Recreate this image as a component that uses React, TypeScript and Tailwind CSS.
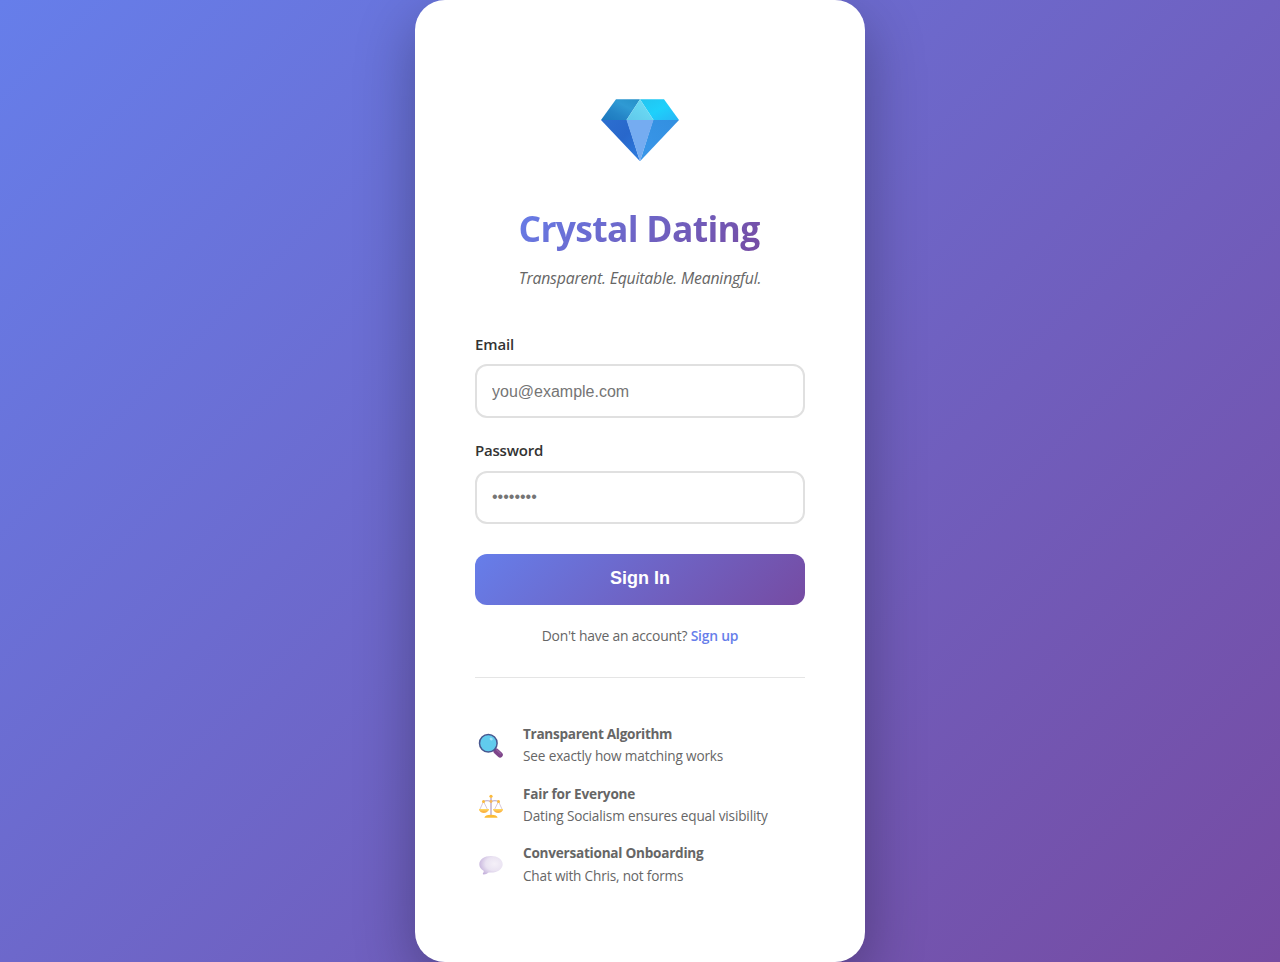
import React from "react";

function Diamond() {
  return (
    <svg width="80" height="64" viewBox="0 0 80 64" aria-hidden="true">
      <defs>
        <linearGradient id="d1" x1="0" y1="1" x2="1" y2="0">
          <stop offset="0" stopColor="#1b78bd" />
          <stop offset="0.35" stopColor="#2585c7" />
          <stop offset="0.65" stopColor="#2f9ad4" />
          <stop offset="1" stopColor="#2590c8" />
        </linearGradient>
        <linearGradient id="d2" x1="0" y1="0" x2="1" y2="1">
          <stop offset="0" stopColor="#22c4f0" />
          <stop offset="0.5" stopColor="#1ed0fb" />
          <stop offset="1" stopColor="#27b5f5" />
        </linearGradient>
        <linearGradient id="d3" x1="0" y1="1" x2="1" y2="0">
          <stop offset="0" stopColor="#60c8ea" />
          <stop offset="1" stopColor="#6ee0f7" />
        </linearGradient>
        <linearGradient id="d4" x1="0" y1="0" x2="1" y2="1">
          <stop offset="0" stopColor="#2c6fd0" />
          <stop offset="0.5" stopColor="#2867cb" />
          <stop offset="1" stopColor="#2c7de0" />
        </linearGradient>
        <linearGradient id="d5" x1="1" y1="0" x2="0" y2="1">
          <stop offset="0" stopColor="#328fe0" />
          <stop offset="1" stopColor="#3a97e9" />
        </linearGradient>
      </defs>
      <path d="M16 1.3H40L26.5 22H1Z" fill="url(#d1)" />
      <path d="M40 1.3H64L79 22H53.5Z" fill="url(#d2)" />
      <path d="M40 1.3L53.5 22H26.5Z" fill="url(#d3)" />
      <path d="M1 22H27L40 63.3Z" fill="url(#d4)" />
      <path d="M53 22H79L40 63.3Z" fill="url(#d5)" />
      <path d="M26.5 22H53.5L40 63.3Z" fill="#75acf1" />
    </svg>
  );
}

function Magnifier() {
  return (
    <svg width="26" height="26" viewBox="0 0 26 26" aria-hidden="true">
      <path d="M15.5 16L18 18.5" stroke="#62588e" strokeWidth="2" />
      <path d="M18.2 18.2L22 21.8" stroke="#7d4489" strokeWidth="5.6" strokeLinecap="round" />
      <path d="M18.8 17L22.8 20.8" stroke="#945f9f" strokeWidth="1.3" strokeLinecap="round" />
      <circle cx="10.3" cy="10.3" r="8.8" fill="#61cbed" stroke="#48578f" strokeWidth="1.5" />
      <ellipse cx="13.2" cy="6" rx="1.7" ry="1.3" transform="rotate(40 13.2 6)" fill="#a3e3f8" />
    </svg>
  );
}

function Scales() {
  return (
    <svg width="26" height="26" viewBox="0 -0.5 26 26" aria-hidden="true">
      <path d="M5.5 8L1.8 16M5.5 8L9.5 16M20.5 8L16.5 16M20.5 8L24.2 16" stroke="#d8c9d8" strokeWidth="1" />
      <path d="M5.5 8Q9 6.3 13 8Q17 6.3 20.5 8" fill="none" stroke="#c8b8cd" strokeWidth="1.4" />
      <path d="M13 4V22" stroke="#cdbdd0" strokeWidth="1.8" />
      <path d="M1 15.5H10.8C10.2 20.9 1.5 20.9 1 15.5ZM15.2 15.5H25C24.5 20.9 15.8 20.9 15.2 15.5Z" fill="#fbb545" />
      <path d="M1 15.5H10.8V16.9H1.3ZM15.2 15.5H25L24.7 16.9H15.5Z" fill="#ffd45c" />
      <path d="M6.4 24.2Q6.8 21.2 13 21.2Q19.2 21.2 19.6 24.2Z" fill="#fcbb35" />
      <circle cx="13" cy="2.8" r="1.6" fill="#fbbb3c" />
      <circle cx="5.5" cy="8" r="1.5" fill="#fbbb3c" />
      <circle cx="20.5" cy="8" r="1.5" fill="#fbbb3c" />
      <circle cx="13" cy="8" r="1.4" fill="#f6b653" />
    </svg>
  );
}

function Bubble() {
  return (
    <svg width="26" height="26" viewBox="0 0 26 26" aria-hidden="true">
      <defs>
        <radialGradient id="b1" cx="0.65" cy="0.42" r="0.75">
          <stop offset="0" stopColor="#f4f0f8" />
          <stop offset="0.5" stopColor="#eae3f2" />
          <stop offset="1" stopColor="#bfaad8" />
        </radialGradient>
      </defs>
      <path
        d="M13 4C19.5 4 24.7 7.4 24.7 12.2C24.7 17 19.5 20.6 13 20.6C12 20.6 11.4 20.6 10.6 20.5C9.2 21.6 7.6 22.5 5.6 22.5C4.8 22.5 4.6 21.8 5.1 21.1C5.6 20.4 5.9 19.5 5.6 18.7C2.9 17.3 1.3 15 1.3 12.2C1.3 7.4 6.5 4 13 4Z"
        fill="url(#b1)"
      />
    </svg>
  );
}

const features = [
  { icon: <Magnifier />, title: "Transparent Algorithm", text: "See exactly how matching works", titleClass: "tracking-[-0.3px]", textClass: "tracking-[-0.15px]" },
  { icon: <Scales />, title: "Fair for Everyone", text: "Dating Socialism ensures equal visibility", titleClass: "tracking-[-0.2px]", textClass: "tracking-[-0.15px]" },
  { icon: <Bubble />, title: "Conversational Onboarding", text: "Chat with Chris, not forms", titleClass: "tracking-[-0.25px]", textClass: "tracking-[-0.19px]" },
];

export default function App() {
  return (
    <div className="flex h-[962px] justify-center overflow-hidden bg-[linear-gradient(135deg,#667eea_0%,#764ba2_100%)] font-['Open_Sans','Noto_Sans',sans-serif] text-[#666]">
      <main className="flex h-full w-[450px] flex-col rounded-[30px] bg-white px-[60px] pt-[98px] shadow-[0_20px_60px_rgba(0,0,0,0.3)]">
        <header className="flex flex-col items-center">
          <Diamond />
          <h1 className="mt-[41px] h-[52px] bg-[linear-gradient(135deg,#667eea_0%,#764ba2_100%)] bg-clip-text pr-[2px] text-[35.5px] leading-[51px] font-bold tracking-[-0.7px] whitespace-nowrap text-transparent">
            Crystal Dating
          </h1>
          <p className="mt-[11px] h-6 text-[15.8px] leading-6 whitespace-nowrap italic tracking-[-0.2px]">
            Transparent. Equitable. Meaningful.
          </p>
        </header>
        <form className="mt-[42px] flex flex-col" onSubmit={(e) => e.preventDefault()}>
          <label htmlFor="email" className="h-6 text-[15px] leading-6 font-semibold tracking-[-0.15px] text-[#333]">
            Email
          </label>
          <input
            id="email"
            type="email"
            placeholder="you@example.com"
            className="mt-2 h-[54px] rounded-xl border-2 border-[#e0e0e0] px-[15px] pt-[2px] font-['Liberation_Sans',sans-serif] text-base text-[#333] outline-none placeholder:text-[#757575]"
          />
          <label htmlFor="password" className="mt-5 h-6 text-[15px] leading-6 font-semibold tracking-[-0.2px] text-[#333]">
            Password
          </label>
          <input
            id="password"
            type="password"
            placeholder="••••••••"
            className="mt-[9px] h-[53px] rounded-xl border-2 border-[#e0e0e0] px-[15px] pb-[2px] font-['Liberation_Sans',sans-serif] text-base text-[#333] outline-none placeholder:text-[#757575]"
          />
          <button
            type="submit"
            className="mt-[29.5px] h-[51.5px] rounded-xl bg-[linear-gradient(135deg,#667eea_0%,#764ba2_100%)] pb-[1.5px] font-['Liberation_Sans',sans-serif] text-[18px] font-bold text-white"
          >
            Sign In
          </button>
        </form>
        <p className="mt-[19px] h-6 text-center text-[13.9px] leading-6 whitespace-nowrap tracking-[-0.22px]">
          Don't have an account? <a className="font-semibold text-[#667eea]">Sign up</a>
        </p>
        <ul className="mt-[29px] flex flex-col gap-[15px] border-t border-[#e5e5e5] pt-[45px]">
          {features.map((f) => (
            <li key={f.title} className="flex h-[44.6px] gap-[17px]">
              <span className="flex w-[31px] justify-end pt-[10px] pr-[2px]">{f.icon}</span>
              <div className="text-[13.6px] leading-[22.4px] whitespace-nowrap">
                <strong className={"block font-bold " + f.titleClass}>{f.title}</strong>
                <span className={"block " + f.textClass}>{f.text}</span>
              </div>
            </li>
          ))}
        </ul>
      </main>
    </div>
  );
}
